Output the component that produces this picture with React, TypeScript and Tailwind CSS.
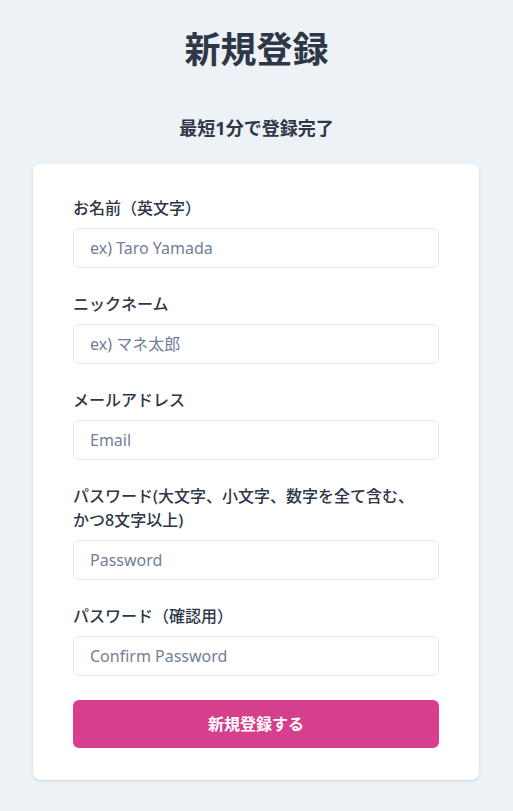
import React from "react";

type Field = {
  label: React.ReactNode;
  placeholder: string;
  type: string;
};

const fields: Field[] = [
  { label: "お名前（英文字）", placeholder: "ex) Taro Yamada", type: "text" },
  { label: "ニックネーム", placeholder: "ex) マネ太郎", type: "text" },
  { label: "メールアドレス", placeholder: "Email", type: "email" },
  {
    label: (
      <>
        パスワード(大文字、小文字、数字を全て含む、
        <br />
        かつ8文字以上)
      </>
    ),
    placeholder: "Password",
    type: "password",
  },
  { label: "パスワード（確認用）", placeholder: "Confirm Password", type: "password" },
];

const App: React.FC = () => {
  return (
    <div className="min-h-screen bg-[#edf2f7] pt-[30px] pb-8 text-[#2d3748] [font-family:'Noto_Sans','Noto_Sans_CJK_JP',sans-serif]">
      <h1 className="text-center text-4xl font-bold leading-10">新規登録</h1>
      <p className="mt-[44px] mb-[22px] text-center text-lg font-bold leading-7">
        最短1分で登録完了
      </p>

      <div className="ml-[33px] w-[446px] rounded-lg bg-white px-10 pt-8 pb-8 shadow-sm">
        <form onSubmit={(e) => e.preventDefault()}>
          {fields.map((f) => (
            <div key={f.placeholder} className="mb-6">
              <label className="mb-2 block text-base font-medium leading-6">
                {f.label}
              </label>
              <input
                type={f.type}
                placeholder={f.placeholder}
                className="block h-10 w-full rounded-md border border-[#e2e8f0] px-4 text-base text-[#2d3748] placeholder:text-[#718096] focus:outline-none"
              />
            </div>
          ))}
          <button
            type="submit"
            className="block h-12 w-full rounded-md bg-[#d53f8c] text-base font-bold text-white"
          >
            新規登録する
          </button>
        </form>
      </div>
    </div>
  );
};

export default App;
